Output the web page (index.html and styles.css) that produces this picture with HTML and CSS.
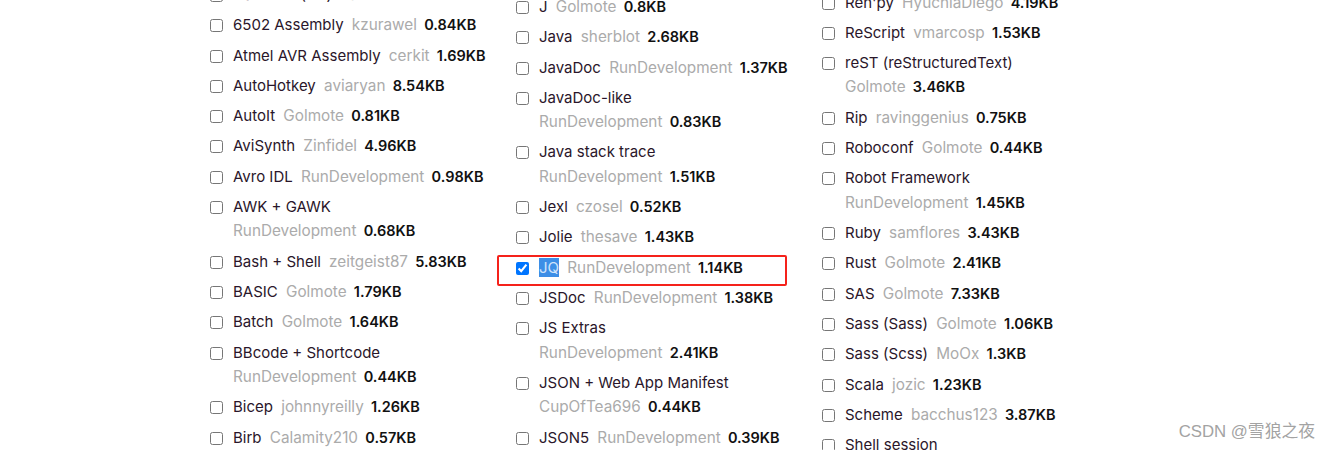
FILE: index.html
```html
<!DOCTYPE html>
<html lang="en">
<head>
<meta charset="utf-8">
<title>Languages</title>
<link rel="stylesheet" href="styles.css">
</head>
<body>
<div class="page">
  <ul class="col col-a">
    <li class="item"><input type="checkbox"><span class="txt"><span class="name">ASP.NET (C#)</span> <span class="meta"><span class="owner">nauzilus</span> <strong class="size">4.67KB</strong></span></span></li>
    <li class="item"><input type="checkbox"><span class="txt"><span class="name">6502 Assembly</span> <span class="meta"><span class="owner">kzurawel</span> <strong class="size">0.84KB</strong></span></span></li>
    <li class="item"><input type="checkbox"><span class="txt"><span class="name">Atmel AVR Assembly</span> <span class="meta"><span class="owner">cerkit</span> <strong class="size">1.69KB</strong></span></span></li>
    <li class="item"><input type="checkbox"><span class="txt"><span class="name">AutoHotkey</span> <span class="meta"><span class="owner">aviaryan</span> <strong class="size">8.54KB</strong></span></span></li>
    <li class="item"><input type="checkbox"><span class="txt"><span class="name">AutoIt</span> <span class="meta"><span class="owner">Golmote</span> <strong class="size">0.81KB</strong></span></span></li>
    <li class="item"><input type="checkbox"><span class="txt"><span class="name">AviSynth</span> <span class="meta"><span class="owner">Zinfidel</span> <strong class="size">4.96KB</strong></span></span></li>
    <li class="item"><input type="checkbox"><span class="txt"><span class="name">Avro IDL</span> <span class="meta"><span class="owner">RunDevelopment</span> <strong class="size">0.98KB</strong></span></span></li>
    <li class="item"><input type="checkbox"><span class="txt"><span class="name">AWK + GAWK</span> <span class="meta"><span class="owner">RunDevelopment</span> <strong class="size">0.68KB</strong></span></span></li>
    <li class="item"><input type="checkbox"><span class="txt"><span class="name">Bash + Shell</span> <span class="meta"><span class="owner">zeitgeist87</span> <strong class="size">5.83KB</strong></span></span></li>
    <li class="item"><input type="checkbox"><span class="txt"><span class="name">BASIC</span> <span class="meta"><span class="owner">Golmote</span> <strong class="size">1.79KB</strong></span></span></li>
    <li class="item"><input type="checkbox"><span class="txt"><span class="name">Batch</span> <span class="meta"><span class="owner">Golmote</span> <strong class="size">1.64KB</strong></span></span></li>
    <li class="item"><input type="checkbox"><span class="txt"><span class="name">BBcode + Shortcode</span> <span class="meta"><span class="owner">RunDevelopment</span> <strong class="size">0.44KB</strong></span></span></li>
    <li class="item"><input type="checkbox"><span class="txt"><span class="name">Bicep</span> <span class="meta"><span class="owner">johnnyreilly</span> <strong class="size">1.26KB</strong></span></span></li>
    <li class="item"><input type="checkbox"><span class="txt"><span class="name">Birb</span> <span class="meta"><span class="owner">Calamity210</span> <strong class="size">0.57KB</strong></span></span></li>
  </ul>
  <ul class="col col-b">
    <li class="item"><input type="checkbox"><span class="txt"><span class="name">J</span> <span class="meta"><span class="owner">Golmote</span> <strong class="size">0.8KB</strong></span></span></li>
    <li class="item"><input type="checkbox"><span class="txt"><span class="name">Java</span> <span class="meta"><span class="owner">sherblot</span> <strong class="size">2.68KB</strong></span></span></li>
    <li class="item"><input type="checkbox"><span class="txt"><span class="name">JavaDoc</span> <span class="meta"><span class="owner">RunDevelopment</span> <strong class="size">1.37KB</strong></span></span></li>
    <li class="item"><input type="checkbox"><span class="txt"><span class="name">JavaDoc-like</span> <span class="meta"><span class="owner">RunDevelopment</span> <strong class="size">0.83KB</strong></span></span></li>
    <li class="item"><input type="checkbox"><span class="txt"><span class="name">Java stack trace</span> <span class="meta"><span class="owner">RunDevelopment</span> <strong class="size">1.51KB</strong></span></span></li>
    <li class="item"><input type="checkbox"><span class="txt"><span class="name">Jexl</span> <span class="meta"><span class="owner">czosel</span> <strong class="size">0.52KB</strong></span></span></li>
    <li class="item"><input type="checkbox"><span class="txt"><span class="name">Jolie</span> <span class="meta"><span class="owner">thesave</span> <strong class="size">1.43KB</strong></span></span></li>
    <li class="item item-marked"><input type="checkbox" checked><span class="txt"><span class="name"><span class="sel">JQ</span></span> <span class="meta"><span class="owner">RunDevelopment</span> <strong class="size">1.14KB</strong></span></span></li>
    <li class="item"><input type="checkbox"><span class="txt"><span class="name">JSDoc</span> <span class="meta"><span class="owner">RunDevelopment</span> <strong class="size">1.38KB</strong></span></span></li>
    <li class="item"><input type="checkbox"><span class="txt"><span class="name">JS Extras</span> <span class="meta"><span class="owner">RunDevelopment</span> <strong class="size">2.41KB</strong></span></span></li>
    <li class="item"><input type="checkbox"><span class="txt"><span class="name">JSON + Web App Manifest</span> <span class="meta"><span class="owner">CupOfTea696</span> <strong class="size">0.44KB</strong></span></span></li>
    <li class="item"><input type="checkbox"><span class="txt"><span class="name">JSON5</span> <span class="meta"><span class="owner">RunDevelopment</span> <strong class="size">0.39KB</strong></span></span></li>
  </ul>
  <ul class="col col-c">
    <li class="item"><input type="checkbox"><span class="txt"><span class="name">Ren'py</span> <span class="meta"><span class="owner">HyuchiaDiego</span> <strong class="size">4.19KB</strong></span></span></li>
    <li class="item"><input type="checkbox"><span class="txt"><span class="name">ReScript</span> <span class="meta"><span class="owner">vmarcosp</span> <strong class="size">1.53KB</strong></span></span></li>
    <li class="item"><input type="checkbox"><span class="txt"><span class="name">reST (reStructuredText)</span> <span class="meta"><span class="owner">Golmote</span> <strong class="size">3.46KB</strong></span></span></li>
    <li class="item"><input type="checkbox"><span class="txt"><span class="name">Rip</span> <span class="meta"><span class="owner">ravinggenius</span> <strong class="size">0.75KB</strong></span></span></li>
    <li class="item"><input type="checkbox"><span class="txt"><span class="name">Roboconf</span> <span class="meta"><span class="owner">Golmote</span> <strong class="size">0.44KB</strong></span></span></li>
    <li class="item"><input type="checkbox"><span class="txt"><span class="name">Robot Framework</span> <span class="meta"><span class="owner">RunDevelopment</span> <strong class="size">1.45KB</strong></span></span></li>
    <li class="item"><input type="checkbox"><span class="txt"><span class="name">Ruby</span> <span class="meta"><span class="owner">samflores</span> <strong class="size">3.43KB</strong></span></span></li>
    <li class="item"><input type="checkbox"><span class="txt"><span class="name">Rust</span> <span class="meta"><span class="owner">Golmote</span> <strong class="size">2.41KB</strong></span></span></li>
    <li class="item"><input type="checkbox"><span class="txt"><span class="name">SAS</span> <span class="meta"><span class="owner">Golmote</span> <strong class="size">7.33KB</strong></span></span></li>
    <li class="item"><input type="checkbox"><span class="txt"><span class="name">Sass (Sass)</span> <span class="meta"><span class="owner">Golmote</span> <strong class="size">1.06KB</strong></span></span></li>
    <li class="item"><input type="checkbox"><span class="txt"><span class="name">Sass (Scss)</span> <span class="meta"><span class="owner">MoOx</span> <strong class="size">1.3KB</strong></span></span></li>
    <li class="item"><input type="checkbox"><span class="txt"><span class="name">Scala</span> <span class="meta"><span class="owner">jozic</span> <strong class="size">1.23KB</strong></span></span></li>
    <li class="item"><input type="checkbox"><span class="txt"><span class="name">Scheme</span> <span class="meta"><span class="owner">bacchus123</span> <strong class="size">3.87KB</strong></span></span></li>
    <li class="item"><input type="checkbox"><span class="txt"><span class="name">Shell session</span> <span class="meta"><span class="owner">RunDevelopment</span> <strong class="size">1.86KB</strong></span></span></li>
  </ul>
</div>
<div class="watermark">CSDN @雪狼之夜</div>
</body>
</html>
```

FILE: styles.css
```css
html, body {
  margin: 0;
  padding: 0;
  background: #fff;
}
body {
  width: 1331px;
  height: 450px;
  overflow: hidden;
  position: relative;
  font-family: Inter, "DejaVu Sans", sans-serif;
  font-size: 15px;
  color: #2a162a;
}
.page {
  display: flex;
  align-items: flex-start;
  padding-left: 210px;
}
.col {
  list-style: none;
  margin: 0;
  padding: 0;
  width: 306px;
  flex: 0 0 306px;
}
.col-a { margin-top: -17.17px; }
.col-b { margin-top: -5.17px; }
.col-c { margin-top: -9.5px; }
.item {
  display: grid;
  grid-template-columns: 13px 253.6px;
  column-gap: 10px;
  align-items: start;
  line-height: 24.33px;
  margin-bottom: 6px;
}
.item input {
  width: 13px;
  height: 13px;
  margin: 6px 0 0 0;
}
.txt {
  display: block;
}
.name {
  color: #2a162a;
  margin-right: 4px;
}
.meta {
  white-space: nowrap;
}
.owner {
  color: #ababab;
  font-size: 15.3px;
  line-height: 1;
}
.size {
  font-family: Inter, "Liberation Sans", sans-serif;
  font-weight: 600;
  font-size: 14.5px;
  line-height: 1;
  color: #111;
  margin-left: 3px;
}
.sel {
  background: #3d8ee6;
  color: #cfe3fb;
}
.item-marked {
  position: relative;
}
.item-marked::after {
  content: "";
  position: absolute;
  left: -19px;
  right: 35px;
  top: -1px;
  bottom: -6px;
  border: 2px solid #f5221b;
  border-radius: 2px;
  pointer-events: none;
}
.watermark {
  position: absolute;
  right: 16px;
  bottom: 7px;
  font-family: "Liberation Sans", "Noto Sans CJK SC", sans-serif;
  font-size: 16.8px;
  line-height: 22px;
  color: #a3a3a3;
  text-shadow: 0 0 1px #fff;
}
```
